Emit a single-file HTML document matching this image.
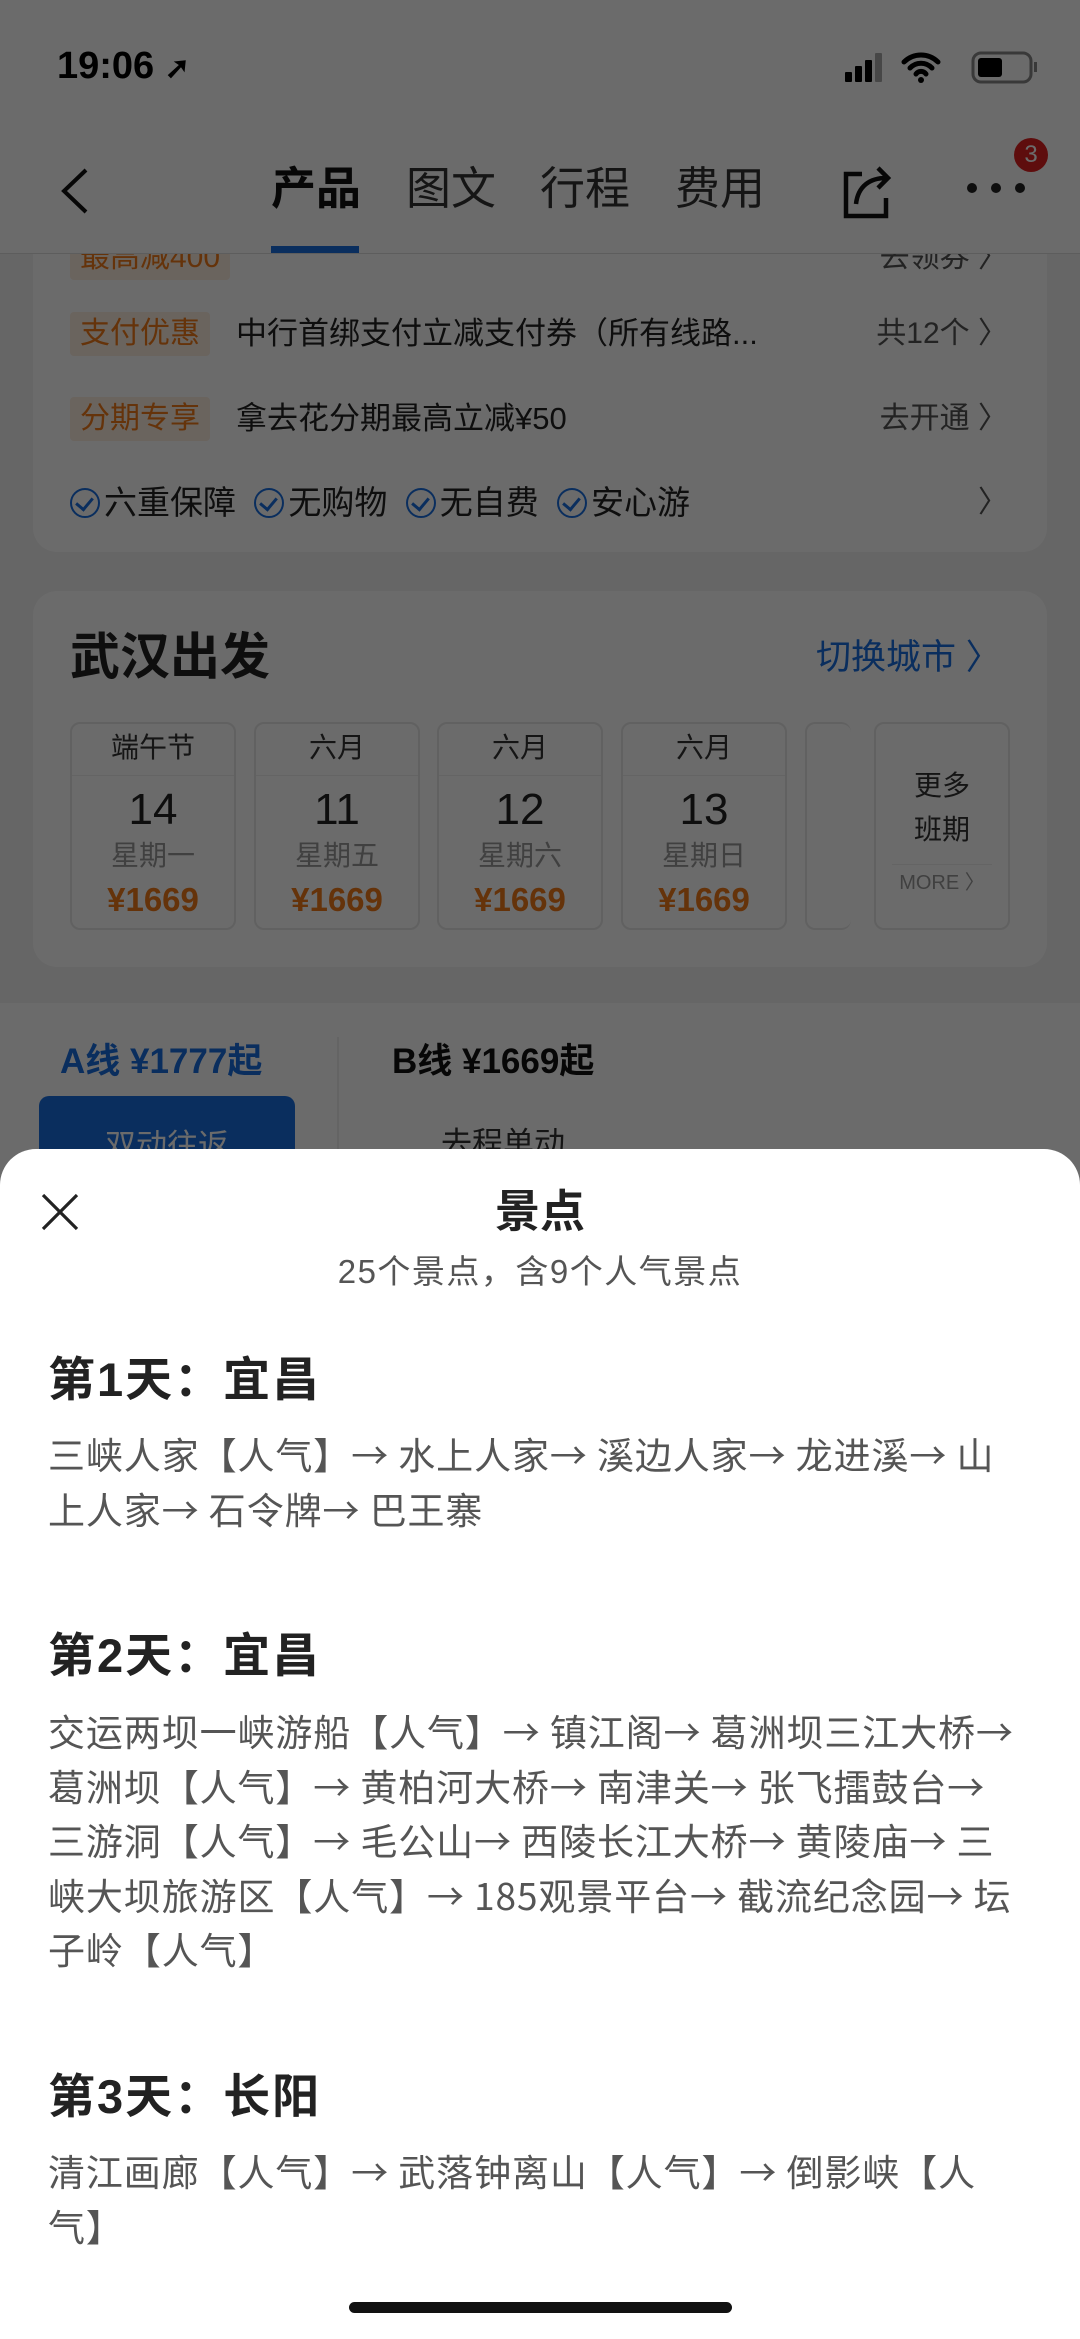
<!DOCTYPE html>
<html><head><meta charset="utf-8"><style>
*{margin:0;padding:0;box-sizing:border-box}
body{width:1080px;height:2339px;position:relative;overflow:hidden;background:#f2f2f2;font-family:"Liberation Sans","Noto Sans CJK SC",sans-serif;color:#222}
.a{position:absolute;white-space:nowrap}
.card{position:absolute;background:#fff;border-radius:24px}
.tag{position:absolute;background:#fdeee0;color:#f07a1a;font-size:30px;line-height:44px;padding:0 10px;border-radius:4px}
.row{position:absolute;font-size:31px;line-height:44px;color:#222;white-space:nowrap}
.rt{position:absolute;right:72px;font-size:30px;line-height:44px;color:#555}
.db{position:absolute;top:722px;height:208px;width:166px;border:2px solid #e6e6e6;border-radius:10px;text-align:center;background:#fff}
.db .m{position:absolute;left:0;right:0;top:6px;font-size:28px;line-height:36px;color:#333;border-bottom:1px solid #eee;height:46px}
.db .n{position:absolute;left:0;right:0;top:60px;font-size:44px;line-height:52px;color:#222}
.db .w{position:absolute;left:0;right:0;top:114px;font-size:28px;line-height:36px;color:#999}
.db .p{position:absolute;left:0;right:0;top:156px;font-size:33px;line-height:40px;color:#f07a1a;font-weight:bold}
#ov{position:absolute;left:0;top:0;width:1080px;height:2339px;background:rgba(0,0,0,0.58)}
#sheet{position:absolute;left:0;top:1149px;width:1080px;height:1190px;background:#fff;border-radius:36px 36px 0 0}
.h{position:absolute;left:48px;font-size:47px;font-weight:bold;color:#222;line-height:60px;letter-spacing:2px}
.t{position:absolute;left:48px;font-size:37px;letter-spacing:0.9px;color:#555;line-height:54.5px;white-space:nowrap;font-family:"Noto Sans CJK SC",sans-serif}
.ck{display:inline-block;width:30px;height:30px;border:2.5px solid #1a6fe0;border-radius:50%;vertical-align:-4px;margin-right:4px;position:relative}
.ck:after{content:"";position:absolute;left:7px;top:4px;width:8px;height:13px;border:solid #1a6fe0;border-width:0 3px 3px 0;transform:rotate(40deg)}
</style></head><body>
<div class="card" style="left:33px;top:200px;width:1014px;height:352px"></div>
<div class="tag" style="left:70px;top:236px">最高减400</div>
<div class="rt" style="top:236px">去领券 〉</div>
<div class="a" style="left:0;top:0;width:1080px;height:254px;background:#fff;border-bottom:1px solid #ddd"></div>
<div class="a" style="left:57px;top:44px;font-size:38px;font-weight:bold;line-height:44px;color:#000">19:06 <span style="font-size:30px">➚</span></div>
<svg class="a" style="left:840px;top:50px" width="200" height="36" viewBox="0 0 200 36">
<rect x="5" y="22" width="7" height="10" rx="1" fill="#000"/><rect x="15" y="16" width="7" height="16" rx="1" fill="#000"/><rect x="25" y="10" width="7" height="22" rx="1" fill="#000"/><rect x="35" y="3" width="7" height="29" rx="1" fill="#aaa"/>
<path d="M64 12a24 24 0 0 1 34 0M70 18a15 15 0 0 1 22 0M76 24a6 6 0 0 1 10 0" stroke="#000" stroke-width="5" fill="none" stroke-linecap="round"/><circle cx="81" cy="30" r="3" fill="#000"/>
<rect x="133" y="3" width="58" height="29" rx="8" fill="none" stroke="#888" stroke-width="3"/><rect x="138" y="8" width="24" height="19" rx="3" fill="#000"/><rect x="194" y="12" width="3" height="10" fill="#888"/>
</svg>
<svg class="a" style="left:56px;top:166px" width="36" height="50"><path d="M30 4L8 25L30 46" stroke="#111" stroke-width="4" fill="none"/></svg>
<div class="a" style="left:271px;top:162px;font-size:45px;line-height:54px;color:#111;font-weight:bold">产品</div>
<div class="a" style="left:406px;top:162px;font-size:45px;line-height:54px;color:#333">图文</div>
<div class="a" style="left:540px;top:162px;font-size:45px;line-height:54px;color:#333">行程</div>
<div class="a" style="left:675px;top:162px;font-size:45px;line-height:54px;color:#333">费用</div>
<div class="a" style="left:271px;top:246px;width:88px;height:7px;background:#1a6fe0"></div>
<svg class="a" style="left:840px;top:162px" width="58" height="60"><path d="M22 12H6v42h40V36" stroke="#111" stroke-width="4.5" fill="none"/><path d="M16 42C18 24 30 16 46 16M38 6l10 10l-10 10" stroke="#111" stroke-width="4.5" fill="none"/></svg>
<svg class="a" style="left:964px;top:180px" width="64" height="16"><circle cx="8" cy="8" r="5" fill="#222"/><circle cx="32" cy="8" r="5" fill="#222"/><circle cx="56" cy="8" r="5" fill="#222"/></svg>
<div class="a" style="left:1014px;top:138px;width:34px;height:34px;border-radius:17px;background:#e02020;color:#fff;font-size:24px;line-height:34px;text-align:center">3</div>

<div class="tag" style="left:70px;top:312px">支付优惠</div>
<div class="row" style="left:236px;top:312px">中行首绑支付立减支付券（所有线路...</div>
<div class="rt" style="top:312px">共12个 〉</div>
<div class="tag" style="left:70px;top:397px">分期专享</div>
<div class="row" style="left:236px;top:397px">拿去花分期最高立减¥50</div>
<div class="rt" style="top:397px">去开通 〉</div>
<div class="row" style="left:70px;top:481px;font-size:33px"><span class="ck"></span>六重保障&nbsp; <span class="ck"></span>无购物&nbsp; <span class="ck"></span>无自费&nbsp; <span class="ck"></span>安心游</div>
<div class="rt" style="top:481px">〉</div>

<div class="card" style="left:33px;top:591px;width:1014px;height:376px"></div>
<div class="a" style="left:70px;top:628px;font-size:50px;font-weight:bold;line-height:58px">武汉出发</div>
<div class="a" style="left:816px;top:636px;font-size:35px;color:#1a6fe0;line-height:44px">切换城市 〉</div>
<div class="db" style="left:70px"><div class="m">端午节</div><div class="n">14</div><div class="w">星期一</div><div class="p">¥1669</div></div>
<div class="db" style="left:254px"><div class="m">六月</div><div class="n">11</div><div class="w">星期五</div><div class="p">¥1669</div></div>
<div class="db" style="left:437px"><div class="m">六月</div><div class="n">12</div><div class="w">星期六</div><div class="p">¥1669</div></div>
<div class="db" style="left:621px"><div class="m">六月</div><div class="n">13</div><div class="w">星期日</div><div class="p">¥1669</div></div>
<div class="db" style="left:805px;width:46px;border-right:none"></div>
<div class="db" style="left:874px;width:136px"><div style="position:absolute;left:0;right:0;top:40px;font-size:28px;line-height:44px;color:#333">更多<br>班期</div><div style="position:absolute;left:16px;right:16px;top:140px;border-top:1px solid #eee;font-size:20px;line-height:36px;color:#999">MORE 〉</div></div>

<div class="a" style="left:0;top:1003px;width:1080px;height:200px;background:#fff"></div>
<div class="a" style="left:60px;top:1040px;font-size:35px;font-weight:bold;color:#1a6fe0;line-height:44px">A线 ¥1777起</div>
<div class="a" style="left:337px;top:1037px;width:2px;height:120px;background:#eee"></div>
<div class="a" style="left:392px;top:1040px;font-size:35px;font-weight:bold;color:#111;line-height:44px">B线 ¥1669起</div>
<div class="a" style="left:39px;top:1096px;width:256px;height:80px;background:#1a6fe0;border-radius:10px;color:#fff;font-size:31px;text-align:center;line-height:100px">双动往返</div>
<div class="a" style="left:441px;top:1122px;font-size:31px;color:#333;line-height:44px">去程单动</div>

<div id="ov"></div>

<div id="sheet">
<svg class="a" style="left:41px;top:44px" width="38" height="38"><path d="M2 2L36 36M36 2L2 36" stroke="#222" stroke-width="3.2"/></svg>
<div class="a" style="left:0;width:1080px;text-align:center;top:36px;font-size:45px;font-weight:bold;line-height:54px;color:#222">景点</div>
<div class="a" style="left:0;width:1080px;text-align:center;top:102px;font-size:33px;letter-spacing:1.5px;line-height:42px;color:#555">25个景点，含9个人气景点</div>
<div class="h" style="top:201px">第1天：宜昌</div>
<div class="t" style="top:277px">三峡人家【人气】→ 水上人家→ 溪边人家→ 龙进溪→ 山<br>上人家→ 石令牌→ 巴王寨</div>
<div class="h" style="top:477px">第2天：宜昌</div>
<div class="t" style="top:554px">交运两坝一峡游船【人气】→ 镇江阁→ 葛洲坝三江大桥→<br>葛洲坝【人气】→ 黄柏河大桥→ 南津关→ 张飞擂鼓台→<br>三游洞【人气】→ 毛公山→ 西陵长江大桥→ 黄陵庙→ 三<br>峡大坝旅游区【人气】→ 185观景平台→ 截流纪念园→ 坛<br>子岭【人气】</div>
<div class="h" style="top:918px">第3天：长阳</div>
<div class="t" style="top:994px">清江画廊【人气】→ 武落钟离山【人气】→ 倒影峡【人<br>气】</div>
<div class="a" style="left:349px;top:1153px;width:383px;height:11px;border-radius:6px;background:#111"></div>
</div>
</body></html>
